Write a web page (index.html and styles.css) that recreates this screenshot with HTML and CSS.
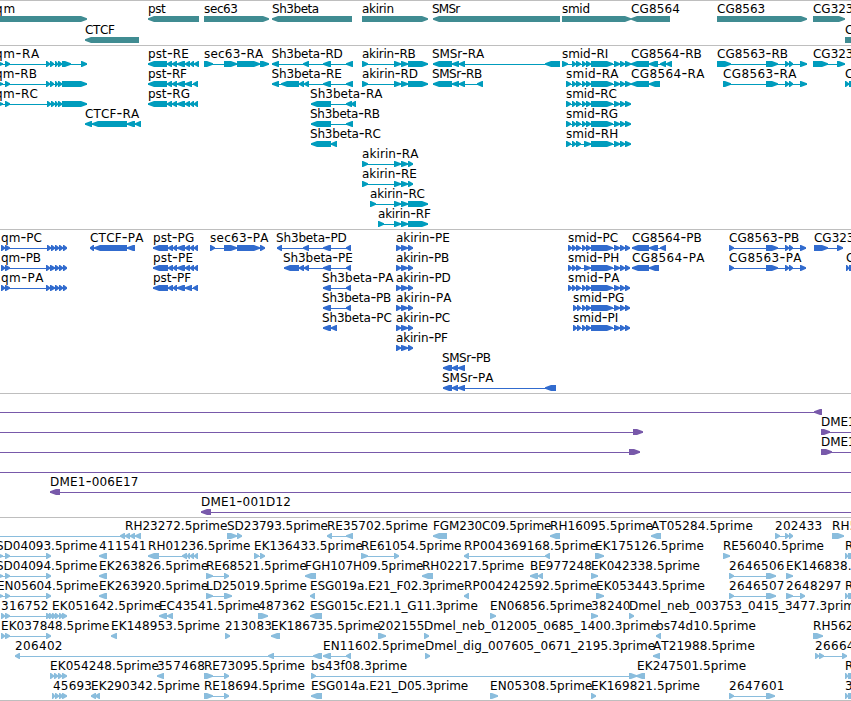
FILE: index.html
```html
<!DOCTYPE html>
<html lang="en">
<head>
<meta charset="utf-8">
<title>Genome browser</title>
<link rel="stylesheet" href="styles.css">
</head>
<body>
<main class="browser">
  <svg class="track track-gene" data-track="gene"></svg>
  <svg class="track track-mrna" data-track="mrna"></svg>
  <svg class="track track-cds" data-track="cds"></svg>
  <svg class="track track-bac" data-track="bac"></svg>
  <svg class="track track-est" data-track="est"></svg>
</main>
<script src="tracks.js"></script>
</body>
</html>
```
FILE: styles.css
```css
body {
  margin: 0;
  background: #fff;
  overflow: hidden;
}

.browser {
  display: flex;
  flex-direction: column;
  width: 851px;
  height: 701px;
  box-sizing: border-box;
  border-bottom: 1px solid #bebebe;
}

.track {
  display: block;
  flex: none;
  width: 100%;
  box-sizing: border-box;
  border-top: 1px solid #bebebe;
  overflow: hidden;
}

.track text {
  font-family: "DejaVu Sans", sans-serif;
  font-size: 12px;
  font-kerning: none;
  fill: #000;
  white-space: pre;
}

.track .dash { font-size: 16px; }

.track-gene { height: 45px; color: #408c92; }
.track-mrna { height: 184px; color: #009cbd; }
.track-cds { height: 164px; color: #316bce; }
.track-bac { height: 124px; color: #7859aa; }
.track-est { height: 183px; color: #8abddd; }

.glyph { fill: currentColor; }
```
FILE: tracks.js
```js
// Each feature: row | direction | label | label start[:end] | exons (start:end, comma separated) | optional line span
const tracks = {
  gene: { top: 15, pitch: 21, line: false, rows: `
0|>|qm|-5:14.7|-9:87
1|<|CTCF|85:114.5|85:139
0|<|pst|148:165.3|148:199
0|>|sec63|204:237.5|204:269
0|<|Sh3beta|272:318.7|272:352
0|>|akirin|362:393.5|362:428
0|<|SMSr|432:459.7|433:560
0|>|smid|562:589.5|562:631
0|<|CG8564|631:679.3|631:670
0|>|CG8563|717:764.7|717:807
0|>|CG323|813:853|813:845
1|>|C|845|845:870` },
  mrna: { top: 15, pitch: 20, line: true, rows: `
0|>|qm-RA|-5:38.7|-5:3,5:10,46:50,50:54,55:58,58:62,62:71,81:87
1|>|qm-RB|-5:36.5|-5:3,5:10,46:50,50:54,55:58,58:62,62:87
2|>|qm-RC|-5:37.5|-5:3,5:10,47:51,51:55,55:58,58:62,62:87
3|<|CTCF-RA|85:138.7|85:92,92:127,127:135,135:141
0|<|pst-RE|148:188.3|148:167,167:172,172:177,177:185,185:190,190:194,194:199
1|<|pst-RF|148:186.5|148:167,167:172,172:177,177:185,185:192,193:198
2|<|pst-RG|148:189.5|148:167,167:172,172:177,177:185,185:190,190:194,194:198
0|>|sec63-RA|204:262.7|204:213,224:237,237:260,260:269
0|<|Sh3beta-RD|271.5:342.3|272:279,303:309,323:331,346:353
1|<|Sh3beta-RE|271.5:341.3|272:279,281:299,299:304,304:309,323:331,346:353
2|<|Sh3beta-RA|310:382|311:331,346:352,351:356
3|<|Sh3beta-RB|310:379.5|311:331,346:353
4|<|Sh3beta-RC|310:380.3|311:331,331:337
0|>|akirin-RB|362:415.3|362:368,394:401,401:408,408:428
1|>|akirin-RD|362:417.5|362:368,394:401,401:408,408:428
5|>|akirin-RA|362:418|362:368,394:401,401:408,408:413
6|>|akirin-RE|362:416.3|362:368,394:401,401:408,408:413
7|>|akirin-RC|370:424.5|370:376,394:401,401:408,408:428
8|>|akirin-RF|378:430.3|378:384,394:401,401:408,408:428
0|<|SMSr-RA|432:483.7|433:452,452:459,459:465,545:560
1|<|SMSr-RB|432:481.7|433:452,452:459,459:465,477:483
0|>|smid-RI|562:607.7|562:568,572:576,576:581,582:586,586:591,591:613,614:620,620:625,625:631
1|>|smid-RA|566:618|566:571,572:576,576:581,582:586,586:591,591:613,614:620,620:625,625:631
2|>|smid-RC|566:616.5|566:571,572:576,576:581,582:586,586:591,591:613,614:620,620:625,625:631
3|>|smid-RG|566:617.5|566:571,572:576,576:581,582:586,586:591,591:613,614:620,620:625,625:631
4|>|smid-RH|566:617.7|566:571,572:576,576:581,584:591,591:613,614:620,620:625,625:631
0|<|CG8564-RB|631:701.3|631:649,649:658,660:666,666:672
1|<|CG8564-RA|631:704|631:649,649:660
0|>|CG8563-RB|717:787.5|717:731,766:778,785:789,789:793,800:807
1|>|CG8563-RA|723:796|723:731,766:778,785:789,789:793,800:807
0|>|CG323|813:853|813:828,837:845
1|>|C|845|845:849,849:859` },
  cds: { top: 15, pitch: 20, line: true, rows: `
0|>|qm-PC|1:41.5|1:5,5:10,47:51,51:55,55:59,59:63,63:67
1|>|qm-PB|1:40.5|1:5,5:10,46:50,50:55,55:59,59:63,63:67
2|>|qm-PA|1:43|1:5,5:10,46:50,50:55,55:59,59:63,63:67
0|<|CTCF-PA|90:143|90:94,94:127,127:135
0|<|pst-PG|153:193.7|153:168,168:173,173:177,177:185,185:190,190:194,194:198
1|<|pst-PE|153:192.5|153:168,168:173,173:177,177:185,185:190,190:194,194:198
2|<|pst-PF|153:190.7|153:168,168:173,173:177,177:185,185:192,193:198
0|>|sec63-PA|210:268|210:215,224:237,237:260,260:265
0|<|Sh3beta-PD|276:346.3|277:282,303:309,323:331,346:351
1|<|Sh3beta-PE|283:352.3|284:299,299:304,304:309,323:331,346:351
2|<|Sh3beta-PA|322:393|323:331,346:351
3|<|Sh3beta-PB|322:390.7|323:331,346:351
4|<|Sh3beta-PC|322:391.3|323:331,331:337
0|>|akirin-PE|396:449.3|396:401,401:408,408:413
1|>|akirin-PB|396:448.7|396:401,401:408,408:413
2|>|akirin-PD|396:450.3|396:401,401:408,408:413
3|>|akirin-PA|396:451|396:401,401:408,408:413
4|>|akirin-PC|396:449.7|396:401,401:408,408:413
5|>|akirin-PF|396:447.5|396:401,401:408,408:413
6|<|SMSr-PB|442:490.5|443:452,452:458,458:465
7|<|SMSr-PA|442:493|443:452,452:458,458:465,545:556
0|>|smid-PC|568:617.7|568:572,572:576,576:581,582:586,586:591,591:613,614:620,620:625,625:630
1|>|smid-PH|568:618.7|568:572,572:576,576:581,584:591,591:613,614:620,620:625,625:630
2|>|smid-PA|568:619|568:572,572:576,576:581,582:586,586:591,591:613,614:620,620:625,625:630
3|>|smid-PG|573:623.7|573:577,577:581,582:586,586:591,591:613,614:620,620:625,625:630
4|>|smid-PI|573:617.7|573:577,577:581,582:586,586:591,591:613,614:620,620:625,625:630
0|<|CG8564-PB|632:701.3|632:649,649:658,660:666
1|<|CG8564-PA|632:704|632:649,649:659
0|>|CG8563-PB|729:798.7|729:734,766:778,785:789,789:793,800:806
1|>|CG8563-PA|729:801|729:734,766:778,785:789,789:793,800:806
0|>|CG323|814:854|814:828,837:843
1|>|C|846|846:849,849:859` },
  bac: { top: 15, pitch: 20, line: true, rows: `
0|<||0|814:822|-5:822
1|>||0|633:643|-5:643
1|>|DME1|821:855|821:830|821:860
2|>||0|629:640|-5:640
2|>|DME1|821:855|821:832|821:860
3|>||0||-5:860
4|<|DME1-006E17|50:138|50:60|50:860
5|<|DME1-001D12|201:290.5|201:211|201:860` },
  est: { top: 15, pitch: 20, line: true, rows: `
0|<|RH23272.5prime|125:227|120:125,125:130,130:135,135:141|-5:141
0|>|SD23793.5prime|227:327.5|227:237,237:242
0|<|RE35702.5prime|327:427.5|327:332,346:353
0|<|FGM230C09.5prime|433:551|433:447
0|<|RH16095.5prime|550:652.3|550:560
0|<|AT05284.5prime|651:752.3|651:661
0|>|202433|775:821.7|775:780,785:789,789:793
0|>|RH5|832:857|832:844
1|>|SD04093.5prime|-4:97|-5:3,5:10,46:51
1|<|411541|99:146|99:107
1|<|RH01236.5prime|148:250|148:159,182:187,187:190,190:194,194:198
1|>|EK136433.5prime|254:362.3|254:259,260:265
1|>|RE61054.5prime|361:461|361:368,394:399
1|<|RP004369168.5prime|464:597|464:469,545:550
1|>|EK175126.5prime|595:703.3|595:604
1|>|RE56040.5prime|723:823.5|723:730
1|>|R|845|845:848,848:859
2|>|SD04094.5prime|-4:97|-5:3,5:10,46:51
2|<|EK263826.5prime|99:208|99:107
2|>|RE68521.5prime|206:306.3|206:213,224:229
2|<|FGH107H09.5prime|305:423|305:316
2|<|RH02217.5prime|422:523.7|422:433
2|<|BE977248|530:591.3|530:538,538:543
2|>|EK042338.5prime|591:699.5|591:598
2|>|2646506|729:784|729:734,766:776
2|>|EK146838.|786:851|786:793
3|>|EN05604.5prime|-3:98|-5:3,5:10,46:51
3|<|EK263920.5prime|99:208|99:107
3|>|LD25019.5prime|206:306.3|206:213,224:232
3|<|ESG019a.E21_F02.3prime|310:463.7|310:315
3|<|RP004242592.5prime|464:597|464:469
3|>|EK053443.5prime|596:704.3|596:604
3|>|2646507|729:784|729:734,766:776
3|>|2648297|786:841|786:793,800:805
3|>|R|845|845:848,848:859
4|>|316752|1:48|1:5,5:10,46:51
4|>|EK051642.5prime|52:161|49:53,52:56,55:59,59:63,62:67
4|<|EC43541.5prime|159:259.5|159:167,167:173
4|>|487362|258:304.7|258:268
4|<|ESG015c.E21.1_G11.3prime|310:477.3|310:322
4|>|EN06856.5prime|490:592|490:496
4|>|38240|591:630|591:598
4|>|Dmel_neb_003753_0415_3477.3prime|629:862|629:634
5|>|EK037848.5prime|1:109|1:5,5:10,46:51
5|<|EK148953.5prime|111:219.5|111:117
5|>|213083|225:271.5|225:230
5|<|EK186735.5prime|271:380|271:280
5|>|202155|378:424|378:386
5|>|Dmel_neb_012005_0685_1400.3prime|424:657.3|424:429
5|<|bs74d10.5prime|656:755.5|656:661
5|>|RH562|813:853|813:823
6|<|206402|15:62|15:20,268:274,313:322
6|<|EN11602.5prime|323:424.3|323:331,346:351
6|>|Dmel_dig_007605_0671_2195.3prime|425:654.7|425:430
6|<|AT21988.5prime|653:754.3|653:660
6|>|26664|815:854|815:819,819:824,842:847
7|>|EK054248.5prime|50:158.5|50:54,54:58,58:62,62:67
7|<|357468|157:204.5|157:164
7|>|RE73095.5prime|204:304.3|204:213,224:229
7|>|bs43f08.3prime|311:406.7|311:316,629:637
7|<|EK247501.5prime|637:745.7|636:645
7|>|R|845|845:848,848:859
8|>|45693|53:91.5|52:55,55:59,59:63,62:67
8|<|EK290342.5prime|91:199.5|91:96,95:100
8|>|RE18694.5prime|204:304.3|204:213,224:229
8|<|ESG014a.E21_D05.3prime|311:467.7|311:322
8|>|EN05308.5prime|490:592|490:498
8|>|EK169821.5prime|591:699.5|591:596
8|>|2647601|729:784|729:734,766:775
8|>|3|845|845:848,848:859` }
};

const NS = "http://www.w3.org/2000/svg";
const HEAD = 6;

function add(parent, name, attrs) {
  const el = document.createElementNS(NS, name);
  for (const k in attrs) el.setAttribute(k, attrs[k]);
  parent.appendChild(el);
  return el;
}

// Box with a blunt pointed end; narrow exons keep a one pixel base.
function arrow(a, b, y, dir) {
  const h = Math.min(HEAD, b - a - 1);
  const bottom = y + 6, t1 = y + 2.2, t2 = y + 3.8;
  return dir === ">"
    ? `M${a} ${y}H${b - h}L${b} ${t1}V${t2}L${b - h} ${bottom}H${a}z`
    : `M${b} ${y}H${a + h}L${a} ${t1}V${t2}L${a + h} ${bottom}H${b}z`;
}

document.querySelectorAll(".track").forEach((svg) => {
  const t = tracks[svg.dataset.track];
  const features = t.rows.trim().split("\n").map((r) => r.split("|"));
  features.forEach(([row, dir, , , exonText, span]) => {
    const y = t.top + row * t.pitch;
    const exons = exonText ? exonText.split(",").map((e) => e.split(":").map(Number)) : [];
    const [s, e] = span ? span.split(":").map(Number) : [exons[0][0], exons[exons.length - 1][1]];
    if (t.line) add(svg, "rect", { class: "glyph", x: s, y: y + 3, width: e - s, height: 1 });
    exons.forEach(([a, b]) => add(svg, "path", { class: "glyph", d: arrow(a, b, y, dir) }));
  });
  features.forEach(([row, , label, extent]) => {
    if (!label) return;
    const [x, end] = extent.split(":").map(Number);
    const text = add(svg, "text", { x, y: t.top + row * t.pitch - 3 });
    if (end) {
      text.setAttribute("textLength", end - x + 0.5);
      text.setAttribute("lengthAdjust", "spacing");
    }
    label.split(/(-)/).forEach((part) => {
      add(text, "tspan", part === "-" ? { class: "dash" } : {}).textContent = part;
    });
  });
});
```
